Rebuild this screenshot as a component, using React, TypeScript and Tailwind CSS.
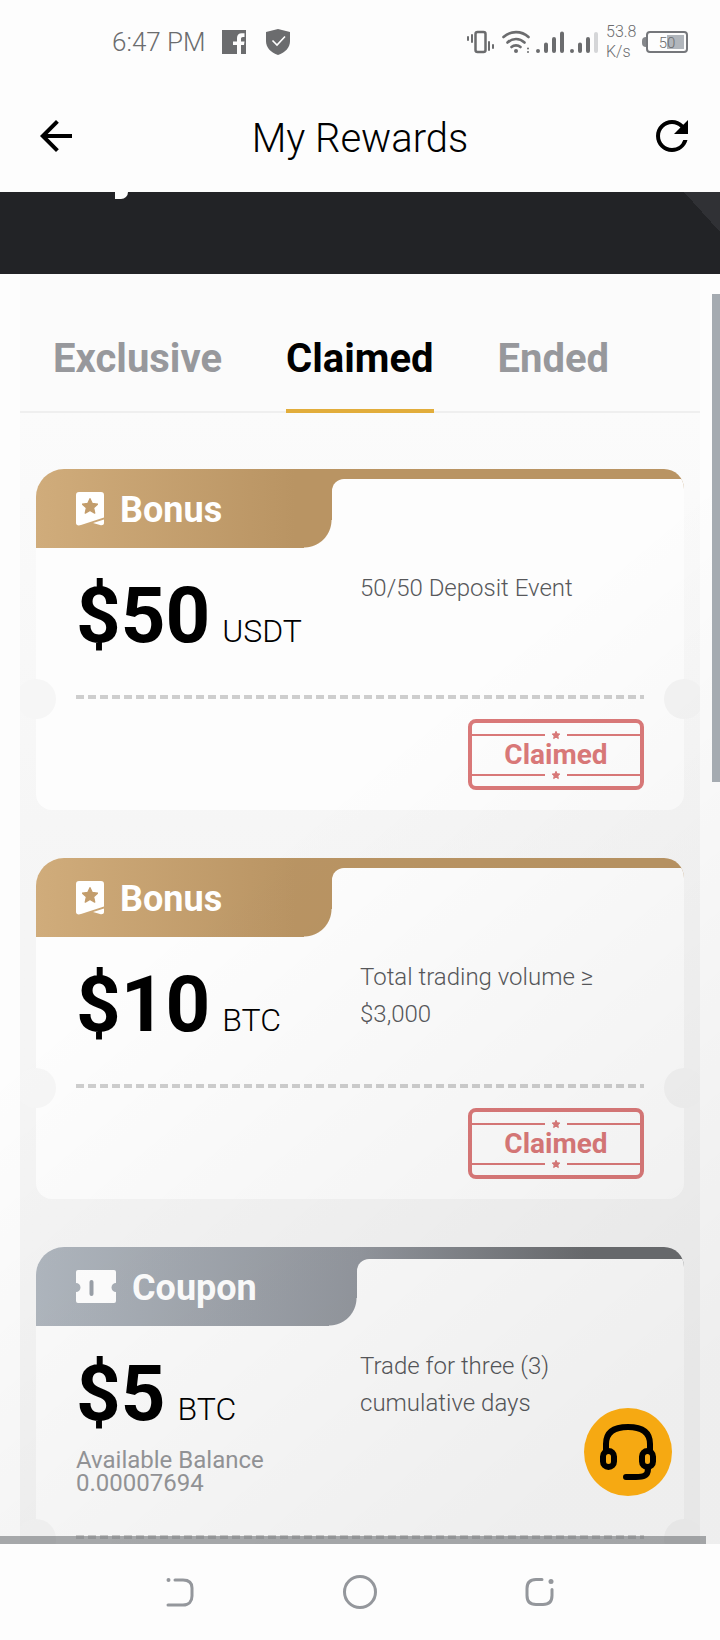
import { MdArrowBack, MdRefresh } from "react-icons/md";

type Reward = {
  kind: "Bonus" | "Coupon";
  amount: string;
  currency: string;
  description: string;
  balance?: string;
};

const rewards: Reward[] = [
  { kind: "Bonus", amount: "$50", currency: "USDT", description: "50/50 Deposit Event" },
  { kind: "Bonus", amount: "$10", currency: "BTC", description: "Total trading volume ≥ $3,000" },
  {
    kind: "Coupon",
    amount: "$5",
    currency: "BTC",
    description: "Trade for three (3) cumulative days",
    balance: "0.00007694",
  },
];

const tabs = ["Exclusive", "Claimed", "Ended"];

const starPoints = "12,1 15.4,8.3 23.4,9.2 17.4,14.7 19.1,22.6 12,18.6 4.9,22.6 6.6,14.7 0.6,9.2 8.6,8.3";

const StatusBar = () => (
  <div className="flex h-20 shrink-0 items-center justify-between pt-1 pl-28 pr-8 text-[#6b6c6e]">
    <div className="flex items-center">
      <span className="text-[26px] leading-8 font-light">6:47 PM</span>
      <svg className="ml-4 size-6" viewBox="0 0 24 24">
        <path fill="currentColor" d="M0 0h24v24h-5v-9h3l.5-3.500H19V9c0-1.300.5-2 2-2h1.500V3.300h-2.800c-3 0-4.700 1.800-4.700 4.700v3.500h-4V15h4v9H0z" />
      </svg>
      <svg className="ml-5 h-[26px] w-6" viewBox="0 0 24 26">
        <path fill="currentColor" d="M12 0l12 3v9c0 7-5 11.500-12 14C5 23.500 0 19 0 12V3z" />
        <path fill="none" stroke="#fff" strokeWidth="1.600" d="M6.500 11.500l4.500 4.500 8-8.500" />
      </svg>
    </div>

    <div className="flex items-center">
      <svg className="h-6 w-[27px]" viewBox="0 0 27 24" fill="none" stroke="currentColor" strokeWidth="2" strokeLinecap="round">
        <rect x="8.500" y="2" width="10" height="20" rx="2" strokeWidth="2.500" />
        <path d="M1 7v3M5 5v7M22 12v8M26 15v3" />
      </svg>
      <svg className="ml-2 h-6 w-7" viewBox="0 0 28 24" fill="none" stroke="currentColor" strokeWidth="2.600" strokeLinecap="round">
        <path d="M1.500 7c7-6.500 18-6.500 25 0M5.500 12.500c5-4.700 12-4.700 17 0M9.500 17c2.500-2.200 6.500-2.200 9 0" />
        <circle cx="14" cy="21" r="2" fill="currentColor" stroke="none" />
        <path d="M26 18.500v0M26 22v0" strokeWidth="2" />
      </svg>
      <svg className="ml-1 h-6 w-16" viewBox="0 0 64 24" stroke="currentColor" strokeWidth="4" strokeLinecap="round">
        <path d="M4 21v0M12 14.500v6.500M20 9v12M28 3.500v17.500M38 21v0M46 14.500v6.500M54 9v12" />
        <path d="M62 4v17" stroke="#d5d6d8" />
      </svg>
      <div className="ml-2 w-9 text-base leading-5 font-light">
        53.8
        <br />
        K/s
      </div>
      <div className="flex items-center">
        <span className="h-2.5 w-1 rounded-l-sm bg-[#85878b]" />
        <div className="flex h-[22px] w-[42px] items-center justify-center rounded-sm border-2 border-[#75777b] p-0.5">
          <span className="h-full w-full bg-linear-to-r from-transparent from-50% to-[#b1b6bc] to-50% text-center text-[15px] leading-4 font-light">
            50
          </span>
        </div>
      </div>
    </div>
  </div>
);

const BonusIcon = () => (
  <svg className="h-[34px] w-7" viewBox="0 0 28 34">
    <path fill="#fff" d="M3 0h22a3 3 0 0 1 3 3v22.500L5 33c-3 1-5 0-5-2V3a3 3 0 0 1 3-3zM28 27.500V31c0 2-2 2.500-4 2l-7-2z" />
    <svg x="6" y="6" width="16" height="16" viewBox="0 0 24 24">
      <polygon points={starPoints} fill="#c39d6c" stroke="#c39d6c" strokeLinejoin="round" strokeWidth="2" />
    </svg>
  </svg>
);

const CouponIcon = () => (
  <svg className="h-[34px] w-10" viewBox="0 0 40 34">
    <path fill="#fff" d="M2 0h36a2 2 0 0 1 2 2v11a4.500 4.500 0 0 0 0 9v9a2 2 0 0 1-2 2H2a2 2 0 0 1-2-2v-9a4.500 4.500 0 0 0 0-9V2a2 2 0 0 1 2-2z" />
    <path d="M15.500 12v12" stroke="#9ba1a9" strokeWidth="4" strokeLinecap="round" />
  </svg>
);

const StampLine = () => (
  <div className="flex h-2 items-center justify-between">
    <span className="h-0.5 w-[73px] bg-[#da7979]" />
    <svg className="size-2 overflow-visible" viewBox="0 0 24 24">
      <polygon points={starPoints} fill="#da7979" stroke="#da7979" strokeWidth="3" />
    </svg>
    <span className="h-0.5 w-[73px] bg-[#da7979]" />
  </div>
);

const ClaimedStamp = () => (
  <div className="flex h-[71px] w-44 flex-col justify-between rounded-lg border-4 border-[#da7979] py-2">
    <StampLine />
    <span className="text-center text-[28px] leading-8 font-bold text-[#da7979]">Claimed</span>
    <StampLine />
  </div>
);

const RewardCard = ({ kind, amount, currency, description, balance }: Reward) => {
  const isBonus = kind === "Bonus";

  return (
    <article className="rounded-t-[28px] rounded-b-2xl bg-[#fdfdfd]">
      <div
        className={
          isBonus
            ? "flex h-[79px] overflow-hidden rounded-tl-[28px] rounded-tr-[20px] bg-linear-to-r from-[#d0ac7b] to-[#b99463] to-40%"
            : "flex h-[79px] overflow-hidden rounded-tl-[28px] rounded-tr-[20px] bg-linear-to-r from-[#b0b7bf] via-[#94989f] via-50% to-[#6b6d70] to-85%"
        }
      >
        <div
          className={
            isBonus
              ? "relative flex w-[296px] items-center gap-4 pl-10"
              : "relative flex w-[321px] items-center gap-4 pl-10"
          }
        >
          {isBonus ? <BonusIcon /> : <CouponIcon />}
          <h2 className="pt-0.5 text-4xl font-bold text-white">{kind}</h2>
          <span className="absolute right-0 bottom-0 size-7 bg-[radial-gradient(circle_at_0_0,transparent_27px,#fdfdfd_28px)]" />
        </div>
        <div
          className={
            isBonus
              ? "mt-[10px] flex-1 rounded-tl-xl bg-[#fdfdfd]"
              : "mt-3 flex-1 rounded-tl-xl bg-[#fdfdfd]"
          }
        />
      </div>

      <div className="grid grid-cols-2 px-10 pb-10">
        <div className="pt-7">
          <p className="flex h-[79px] items-baseline gap-3 text-black">
            <span className="text-[78px] leading-[79px] font-bold">{amount}</span>
            <span className="text-[32px] leading-8 font-light">{currency}</span>
          </p>
          {balance && (
            <p className="mt-4 text-2xl leading-[23px] text-[#96979a]">
              Available Balance
              <br />
              {balance}
            </p>
          )}
        </div>
        <p className="pt-[22px] text-2xl leading-[37px] font-light text-[#57585b]">{description}</p>
      </div>

      <div className="relative px-10">
        <div className="h-1 bg-[repeating-linear-gradient(90deg,#cecece_0_8px,transparent_8px_12px)]" />
        <span className="absolute -top-4 -left-5 size-10 rounded-full bg-[#f6f6f6]" />
        <span className="absolute -top-4 -right-5 size-10 rounded-full bg-[#f4f4f4]" />
      </div>

      <div className="flex justify-end px-10 py-5">
        <ClaimedStamp />
      </div>
    </article>
  );
};

const SupportButton = () => (
  <button aria-label="Support" className="absolute right-12 bottom-12 size-22 rounded-full bg-[#f6a912]">
    <svg className="size-22" viewBox="0 0 88 88" fill="none" stroke="#000" strokeWidth="6" strokeLinecap="round">
      <path d="M22 42v-6c0-12 8-17 22-17s22 5 22 17v6" />
      <rect x="19" y="43" width="11" height="16" rx="5.500" />
      <rect x="58" y="43" width="11" height="16" rx="5.500" />
      <path d="M64 61c0 7-5 8-12 8H42" />
    </svg>
  </button>
);

const SystemNav = () => (
  <nav className="grid h-24 shrink-0 grid-cols-3 items-center justify-items-center px-[90px] text-[#94979c]">
    <button aria-label="Back">
      <svg className="size-8" viewBox="0 0 32 32" fill="none" stroke="currentColor" strokeWidth="3" strokeLinecap="round">
        <path d="M11 4h8c7 0 9 4 9 8v8c0 5-3 9-9 9H4" />
        <circle cx="4.500" cy="4" r="2" fill="currentColor" stroke="none" />
      </svg>
    </button>
    <button aria-label="Home">
      <svg className="size-9" viewBox="0 0 36 36" fill="none" stroke="currentColor" strokeWidth="3">
        <circle cx="18" cy="18" r="15.500" />
      </svg>
    </button>
    <button aria-label="Recents">
      <svg className="size-8" viewBox="0 0 32 32" fill="none" stroke="currentColor" strokeWidth="3" strokeLinecap="round">
        <path d="M18 3.500h-6c-6 0-9 3-9 9v7c0 6 3 9 9 9h7c6 0 9-3 9-9v-6" />
        <circle cx="27" cy="5.500" r="2.500" fill="currentColor" stroke="none" />
      </svg>
    </button>
  </nav>
);

export default function App() {
  return (
    <div className="flex h-screen flex-col bg-[#fdfdfd] font-['Roboto',sans-serif]">
      <StatusBar />

      <header className="grid h-28 shrink-0 grid-cols-[56px_1fr_56px] items-center px-6 text-black">
        <button aria-label="Back" className="justify-self-end">
          <MdArrowBack className="size-12" />
        </button>
        <h1 className="pt-1.5 text-center text-[40px] leading-12 font-light">My Rewards</h1>
        <button aria-label="Refresh" className="justify-self-end">
          <MdRefresh className="size-12" />
        </button>
      </header>

      <main className="relative min-h-0 flex-1 overflow-hidden">
        {/* bottom edge of the hero banner */}
        <div className="flex h-[82px] items-start justify-between bg-[#222326] pl-[115px]">
          <span className="h-[7px] w-[13px] rounded-br-full bg-[#fdfdfd]" />
          <span className="h-10 w-9 bg-linear-to-tr from-transparent from-50% to-[#303135] to-50%" />
        </div>

        <section className="mx-5 overflow-hidden bg-[#fbfbfb]">
          <div role="tablist" className="flex h-[139px] items-end gap-16 border-b-2 border-[#efefef] pl-[33px]">
            {tabs.map((tab) => (
              <button
                key={tab}
                role="tab"
                aria-selected={tab === "Claimed"}
                className="-mb-0.5 border-b-4 border-transparent pb-[26px] text-[40px] leading-12 font-bold text-[#97989c] aria-selected:border-[#e2ad3b] aria-selected:text-black"
              >
                {tab}
              </button>
            ))}
          </div>

          <div className="flex flex-col gap-12 bg-linear-to-b from-[#fbfbfb] to-[#f5f5f5] to-40% px-4 pt-14">
            {rewards.map((reward) => (
              <RewardCard key={reward.amount} {...reward} />
            ))}
          </div>
        </section>

        {/* soft shade growing toward the lower right */}
        <div className="pointer-events-none absolute inset-x-0 top-[82px] bottom-0 bg-[linear-gradient(140deg,transparent_42%,rgba(0,0,0,0.06)_90%)]" />

        <span className="absolute top-[102px] right-0 h-[488px] w-2 bg-[#a5abb1]" />
        <span className="absolute right-[14px] bottom-0 left-0 h-2 bg-[#717478]/60" />
        <SupportButton />
      </main>

      <SystemNav />
    </div>
  );
}
